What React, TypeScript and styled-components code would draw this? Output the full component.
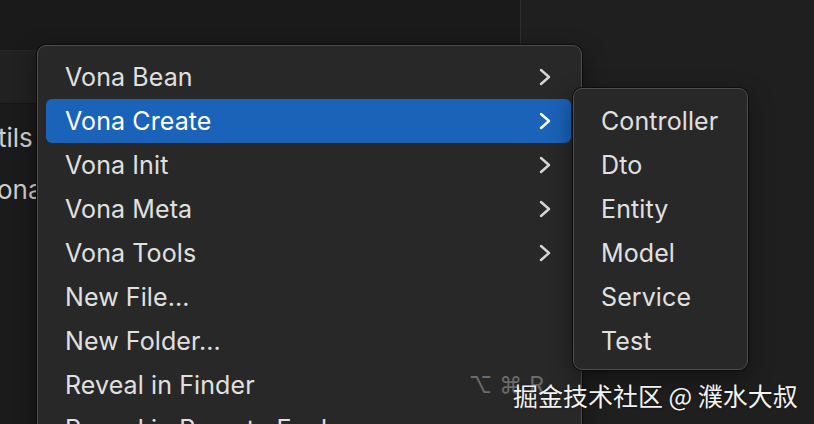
import React from "react";
import styled, { createGlobalStyle } from "styled-components";

const Global = createGlobalStyle`
  html, body { margin: 0; padding: 0; background: #1c1c1c; overflow: hidden; }
  * { box-sizing: border-box; }
`;

const FONT = `Inter, "Noto Sans", "Liberation Sans", sans-serif`;

const Stage = styled.div`
  position: relative;
  width: 814px;
  height: 424px;
  overflow: hidden;
  display: flex;
  font-family: ${FONT};
`;

const LeftPane = styled.div`
  width: 521px;
  display: flex;
  flex-direction: column;
  background: #1b1b1b;
  border-right: 1px solid #2f2f2f;
`;

const TopBar = styled.div`
  height: 50px;
  background: #1a1a1a;
`;

const Header = styled.div`
  height: 54px;
  background: #212121;
  border-top: 1px solid #262626;
  border-bottom: 1px solid #161616;
`;

const FileRow = styled.div<{ $shift: number }>`
  height: 52px;
  display: flex;
  align-items: center;
  color: #cfcfcf;
  font-size: 26px;
  margin-left: ${(p) => p.$shift}px;
  white-space: nowrap;
`;

const FileList = styled.div`
  padding-top: 7px;
  display: flex;
  flex-direction: column;
`;

const RightPane = styled.div`
  flex: 1;
  background: #1f1f1f;
`;

const Menu = styled.div`
  position: absolute;
  left: 37px;
  top: 45px;
  width: 545px;
  height: 420px;
  background: #282828;
  border: 1px solid #4e4e4e;
  border-radius: 9px;
  box-shadow: 0 0 0 1px #0c0c0c, 0 8px 24px rgba(0, 0, 0, 0.45);
  padding: 9px 10px 0 8px;
  display: flex;
  flex-direction: column;
`;

const SubMenu = styled.div`
  position: absolute;
  left: 573px;
  top: 88px;
  width: 175px;
  height: 282px;
  background: #282828;
  border: 1px solid #4e4e4e;
  border-radius: 9px;
  box-shadow: 0 0 0 1px #0c0c0c, 0 8px 24px rgba(0, 0, 0, 0.45);
  padding: 10px 8px 0 8px;
  display: flex;
  flex-direction: column;
`;

const Item = styled.div<{ $active?: boolean }>`
  height: 44px;
  flex: none;
  display: flex;
  align-items: center;
  padding: 0 20px 0 19px;
  border-radius: 6px;
  background: ${(p) => (p.$active ? "#1b62b9" : "transparent")};
  color: ${(p) => (p.$active ? "#ffffff" : "#e0e0e0")};
  font-size: 25px;
  letter-spacing: 0.1px;
  white-space: nowrap;
`;

const Label = styled.span`
  flex: 1;
`;

const Shortcut = styled.span`
  color: #6b6b6b;
  font-size: 23px;
  letter-spacing: 7px;
`;

const Watermark = styled.div`
  position: absolute;
  left: 513px;
  top: 380px;
  color: #f2f2f2;
  font-family: "Noto Sans CJK SC", "Noto Sans", sans-serif;
  font-size: 25px;
  line-height: 30px;
  white-space: nowrap;
  text-shadow: 0 0 3px rgba(0, 0, 0, 0.5);
`;

const Chevron = ({ color }: { color: string }) => (
  <svg width="12" height="18" viewBox="0 0 12 18" fill="none">
    <path d="M2 2 L10 9 L2 16" stroke={color} strokeWidth="2.4" strokeLinecap="round" strokeLinejoin="round" />
  </svg>
);

const mainItems: { label: string; sub?: boolean; active?: boolean; shortcut?: string }[] = [
  { label: "Vona Bean", sub: true },
  { label: "Vona Create", sub: true, active: true },
  { label: "Vona Init", sub: true },
  { label: "Vona Meta", sub: true },
  { label: "Vona Tools", sub: true },
  { label: "New File..." },
  { label: "New Folder..." },
  { label: "Reveal in Finder", shortcut: "⌥⌘R" },
  { label: "Reveal in Remote Explorer" },
];

const subItems = ["Controller", "Dto", "Entity", "Model", "Service", "Test"];

export default function App() {
  return (
    <>
      <Global />
      <Stage>
        <LeftPane>
          <TopBar />
          <Header />
          <FileList>
            <FileRow $shift={-2}>tils</FileRow>
            <FileRow $shift={-3}>ona</FileRow>
          </FileList>
        </LeftPane>
        <RightPane />
        <Menu>
          {mainItems.map((it) => (
            <Item key={it.label} $active={it.active}>
              <Label>{it.label}</Label>
              {it.shortcut && <Shortcut>{it.shortcut}</Shortcut>}
              {it.sub && <Chevron color={it.active ? "#ffffff" : "#d6d6d6"} />}
            </Item>
          ))}
        </Menu>
        <SubMenu>
          {subItems.map((s) => (
            <Item key={s}>
              <Label>{s}</Label>
            </Item>
          ))}
        </SubMenu>
        <Watermark>掘金技术社区 @ 濮水大叔</Watermark>
      </Stage>
    </>
  );
}
